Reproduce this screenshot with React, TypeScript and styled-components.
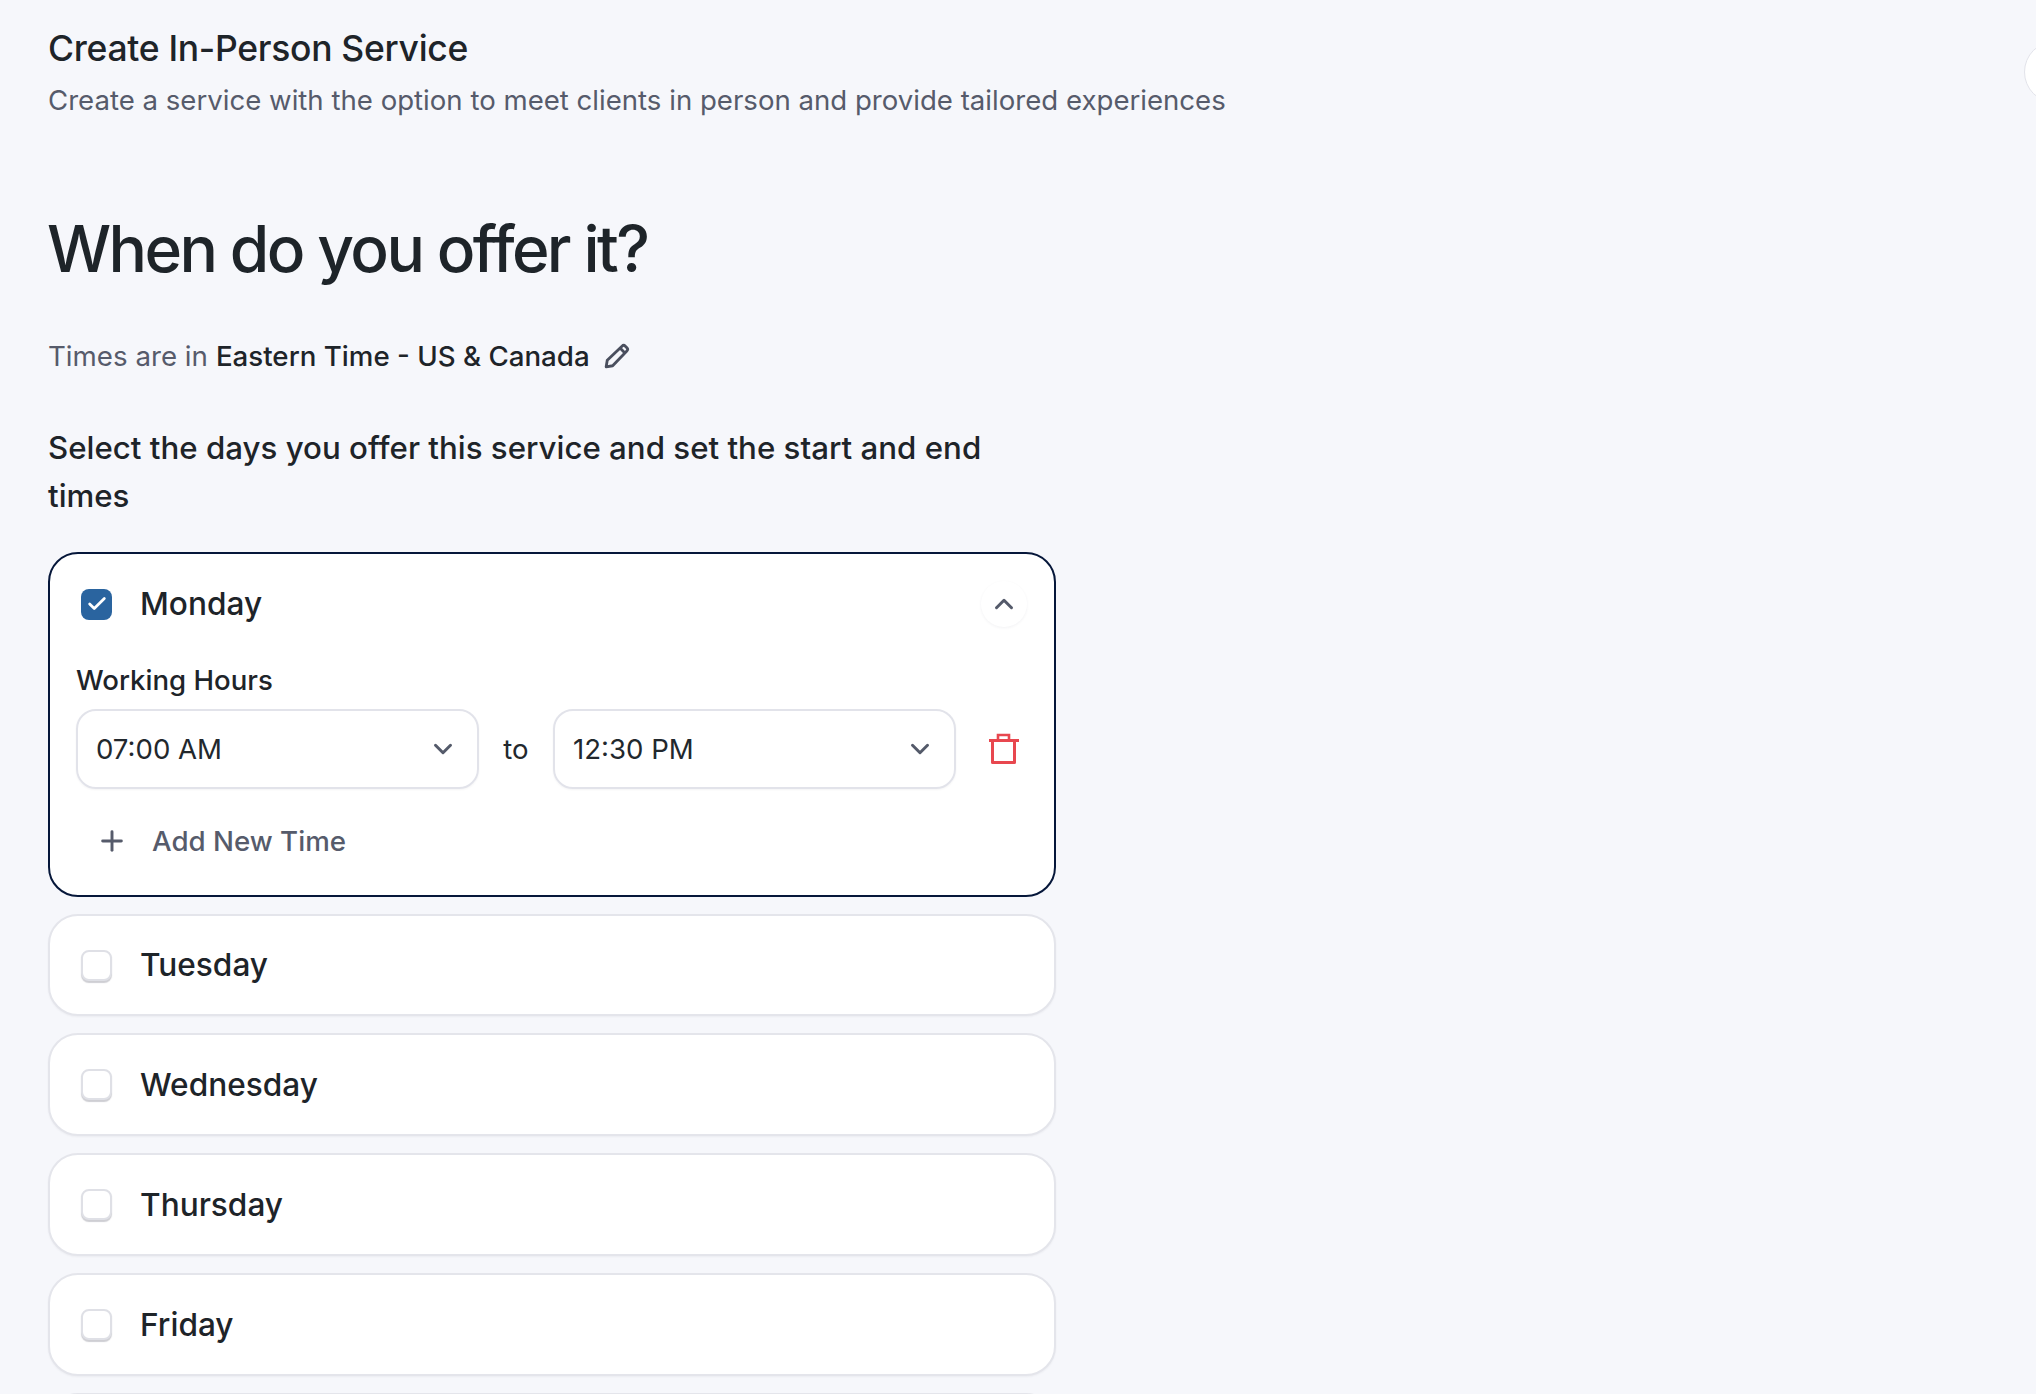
import React from 'react';
import styled, { createGlobalStyle } from 'styled-components';
import { Check, ChevronDown, ChevronUp, Plus } from 'lucide-react';

const GlobalStyle = createGlobalStyle`
  html, body {
    margin: 0;
    height: 1394px;
    overflow: hidden;
    background: #f6f7fb;
  }

  body {
    font-family: Inter, "Noto Sans", sans-serif;
    color: #1e2429;
  }

  * {
    box-sizing: border-box;
  }
`;

const Page = styled.main`
  position: relative;
  height: 1394px;
  padding: 27px 48px 0;
  overflow: hidden;
`;

const CloseCircle = styled.div`
  position: absolute;
  top: 41px;
  left: 2024px;
  width: 62px;
  height: 62px;
  border-radius: 50%;
  background: #fff;
  border: 1.5px solid #e2e3ea;
`;

const PageTitle = styled.h2`
  margin: 0;
  font-size: 35.5px;
  line-height: 44px;
  font-weight: 500;
  letter-spacing: -0.3px;
`;

const PageSubtitle = styled.p`
  margin: 9px 0 0;
  font-size: 27.6px;
  line-height: 40px;
  font-weight: 400;
  color: #565b6b;
`;

const Heading = styled.h1`
  margin: 89px 0 0 -1px;
  font-size: 64px;
  line-height: 80px;
  font-weight: 500;
  letter-spacing: -2.6px;
`;

const TimezoneRow = styled.div`
  display: flex;
  align-items: center;
  margin-top: 47px;
  font-size: 27.7px;
  line-height: 40px;
  color: #565b6b;

  strong {
    margin-left: 8px;
    font-weight: 500;
    color: #1e2429;
  }

  svg {
    margin-left: 14px;
    color: #4a4f5e;
  }
`;

const Prompt = styled.p`
  width: 960px;
  margin: 48px 0 0;
  font-size: 31.25px;
  line-height: 48px;
  font-weight: 500;
`;

const DayList = styled.div`
  display: flex;
  flex-direction: column;
  gap: 17px;
  width: 1008px;
  margin-top: 32px;
`;

const DayCard = styled.section<{ $open?: boolean }>`
  flex-shrink: 0;
  height: ${(p) => (p.$open ? '344.5px' : '102.9px')};
  padding: ${(p) => (p.$open ? '0 26px' : '0 31px')};
  background: #fff;
  border: ${(p) => (p.$open ? '2px solid #06173a' : '2px solid #e4e5eb')};
  border-radius: 30px;
  box-shadow: ${(p) => (p.$open ? 'none' : '0 1px 2px rgba(30, 36, 60, 0.05)')};
`;

const DayHeader = styled.div<{ $open?: boolean }>`
  display: flex;
  align-items: center;
  height: ${(p) => (p.$open ? '100px' : '99px')};
  padding-left: ${(p) => (p.$open ? '5px' : '0')};
`;

const CheckBox = styled.span<{ $checked?: boolean }>`
  display: flex;
  align-items: center;
  justify-content: center;
  width: 31px;
  height: 31px;
  border-radius: 8px;
  background: ${(p) => (p.$checked ? '#2a649f' : '#fff')};
  border: ${(p) => (p.$checked ? 'none' : '2px solid #dfe0e6')};
  box-shadow: ${(p) => (p.$checked ? 'none' : '0 2px 1px rgba(60, 60, 80, 0.25)')};
  color: #fff;
`;

const DayName = styled.span`
  margin-left: 28px;
  font-size: 31.6px;
  line-height: 44px;
  font-weight: 500;
`;

const CollapseButton = styled.button`
  display: flex;
  align-items: center;
  justify-content: center;
  width: 46px;
  height: 46px;
  margin-left: auto;
  margin-right: 1px;
  padding: 0;
  border: none;
  border-radius: 50%;
  background: #fff;
  box-shadow: 0 1px 3px rgba(30, 36, 60, 0.06);
  color: #545a6a;
`;

const FieldLabel = styled.div`
  margin-top: 6px;
  font-size: 27.6px;
  line-height: 40px;
  font-weight: 500;
`;

const TimeRow = styled.div`
  display: flex;
  align-items: center;
  margin-top: 9px;
`;

const TimeSelect = styled.div`
  display: flex;
  align-items: center;
  justify-content: space-between;
  width: 403px;
  height: 80px;
  padding: 0 19px 0 18px;
  border: 2px solid #e2e3ea;
  border-radius: 20px;
  font-size: 27.6px;
  color: #22282d;
  box-shadow: 0 1px 2px rgba(30, 36, 60, 0.05);

  svg {
    color: #545a6a;
  }
`;

const ToLabel = styled.span`
  width: 74px;
  text-align: center;
  font-size: 27.6px;
  color: #22282d;
`;

const RemoveButton = styled.button`
  display: flex;
  align-items: center;
  justify-content: center;
  width: 48px;
  height: 48px;
  margin-left: 24px;
  padding: 0;
  border: none;
  background: none;
  color: #e8474f;
`;

const AddTimeButton = styled.button`
  display: flex;
  align-items: center;
  margin: 26px 0 0 20px;
  padding: 0;
  height: 52px;
  border: none;
  background: none;
  font-family: inherit;
  font-size: 27.7px;
  font-weight: 500;
  color: #565b6b;

  svg {
    margin-right: 24px;
  }
`;

const PencilIcon = () => (
  <svg width="26" height="26" viewBox="0 0 24 24" fill="none" stroke="currentColor" strokeWidth="2.6" strokeLinejoin="round">
    <path d="M2 22l1-6L16.6 2.9a2.2 2.2 0 0 1 3.1 0l1.4 1.4a2.2 2.2 0 0 1 0 3.1L8 21z" />
    <path d="M14.8 4.7l4.5 4.5" />
  </svg>
);

const TrashIcon = () => (
  <svg width="32" height="32" viewBox="0 0 32 32" fill="none" stroke="currentColor" strokeWidth="3">
    <path d="M1 7.5h30" />
    <path d="M4.5 7.5v22h22v-22" strokeLinejoin="round" />
    <path d="M10 7.5v-5.5h11v5.5" strokeWidth="2.6" />
  </svg>
);

const closedDays = ['Tuesday', 'Wednesday', 'Thursday', 'Friday'];

const App = () => {
  return (
    <Page>
      <GlobalStyle />
      <CloseCircle />
      <PageTitle>Create In-Person Service</PageTitle>
      <PageSubtitle>Create a service with the option to meet clients in person and provide tailored experiences</PageSubtitle>
      <Heading>When do you offer it?</Heading>
      <TimezoneRow>
        Times are in <strong>Eastern Time - US &amp; Canada</strong>
        <PencilIcon />
      </TimezoneRow>
      <Prompt>Select the days you offer this service and set the start and end times</Prompt>
      <DayList>
        <DayCard $open>
          <DayHeader $open>
            <CheckBox $checked>
              <Check size={22} strokeWidth={3} />
            </CheckBox>
            <DayName>Monday</DayName>
            <CollapseButton>
              <ChevronUp size={30} strokeWidth={2.4} />
            </CollapseButton>
          </DayHeader>
          <FieldLabel>Working Hours</FieldLabel>
          <TimeRow>
            <TimeSelect>
              07:00 AM
              <ChevronDown size={30} strokeWidth={2.4} />
            </TimeSelect>
            <ToLabel>to</ToLabel>
            <TimeSelect>
              12:30 PM
              <ChevronDown size={30} strokeWidth={2.4} />
            </TimeSelect>
            <RemoveButton>
              <TrashIcon />
            </RemoveButton>
          </TimeRow>
          <AddTimeButton>
            <Plus size={32} strokeWidth={2.2} />
            Add New Time
          </AddTimeButton>
        </DayCard>
        {closedDays.map((day) => (
          <DayCard key={day}>
            <DayHeader>
              <CheckBox />
              <DayName>{day}</DayName>
            </DayHeader>
          </DayCard>
        ))}
        <DayCard />
      </DayList>
    </Page>
  );
};

export default App;
